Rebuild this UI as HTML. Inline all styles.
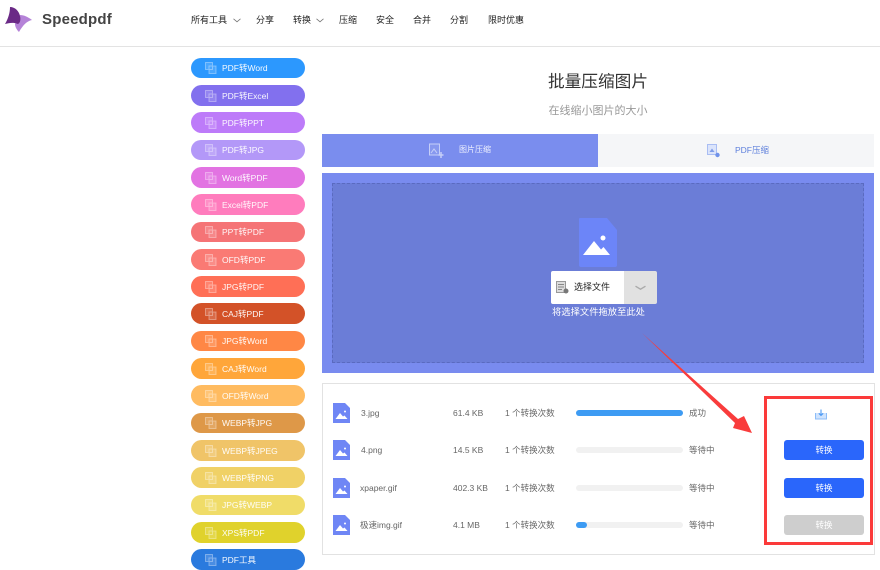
<!DOCTYPE html>
<html lang="zh">
<head>
<meta charset="utf-8">
<title>批量压缩图片</title>
<style>
html,body{margin:0;padding:0;background:#fff}
body{width:880px;height:558px;overflow:hidden;position:relative;font-family:"Liberation Sans","Noto Sans CJK SC",sans-serif}
.a{position:absolute;white-space:nowrap}
.nav{position:absolute;top:14px;font-size:9px;line-height:12px;color:#222;white-space:nowrap}
.b{position:absolute;left:191px;width:114px;border-radius:11px;color:#fff;font-size:8.5px}
.b span{position:absolute;left:31px;top:50%;margin-top:-6px;line-height:12px;white-space:nowrap;opacity:.95}
.b svg{position:absolute;left:14px;top:50%;margin-top:-6px}
.t{position:absolute;font-size:8.5px;line-height:12px;color:#666;white-space:nowrap}
.track{position:absolute;left:576px;width:107px;height:6px;border-radius:3px;background:#f1f1f1}
.fill{position:absolute;left:0;top:0;height:6px;border-radius:3px;background:#3d9bf3}
.btn{position:absolute;left:784px;width:80px;height:20px;border-radius:3px;background:#2a66fb;color:#fff;font-size:8.5px;line-height:20px;text-align:center}
</style>
</head>
<body>
<svg class="a" style="left:0;top:0" width="40" height="40" viewBox="0 0 40 40">
<path d="M20 15 C24 15 28 17 32 20 C27 21 23 25 19 32 C17 30 15 27 15 24 Z" fill="#b583d8"/>
<path d="M10 7 C15 7 19 11 20 16 C21 20 20 23 18 24 C13 22 9 23 5 24 C8 19 10 13 10 7 Z" fill="#6a2a86"/>
</svg>
<div class="a" style="left:42px;top:10px;font-size:15px;line-height:19px;font-weight:bold;color:#444;letter-spacing:.2px">Speedpdf</div>
<div class="nav" style="left:191px">所有工具</div>
<svg class="a" style="left:233px;top:18px" width="8" height="5"><path d="M.5.8l3.500 3L7.500.8" fill="none" stroke="#777" stroke-width=".8"/></svg>
<div class="nav" style="left:256px">分享</div>
<div class="nav" style="left:293px">转换</div>
<svg class="a" style="left:316px;top:18px" width="8" height="5"><path d="M.5.8l3.500 3L7.500.8" fill="none" stroke="#777" stroke-width=".8"/></svg>
<div class="nav" style="left:339px">压缩</div>
<div class="nav" style="left:376px">安全</div>
<div class="nav" style="left:413px">合并</div>
<div class="nav" style="left:450px">分割</div>
<div class="nav" style="left:488px">限时优惠</div>
<div class="a" style="left:0;top:46px;width:880px;height:1px;background:#e3e3e3"></div>

<div class="b" style="top:58px;height:20px;background:#2c98fe"><svg width="12" height="12"><path d="M.5.500h7v7h-7zM4 4h7v7.500h-7z" fill="#fff" fill-opacity=".15" stroke="#fff" stroke-opacity=".35"/></svg><span>PDF转Word</span></div>
<div class="b" style="top:85px;height:21px;background:#8270ee"><svg width="12" height="12"><path d="M.5.500h7v7h-7zM4 4h7v7.500h-7z" fill="#fff" fill-opacity=".15" stroke="#fff" stroke-opacity=".35"/></svg><span>PDF转Excel</span></div>
<div class="b" style="top:112px;height:21px;background:#bd7bf9"><svg width="12" height="12"><path d="M.5.500h7v7h-7zM4 4h7v7.500h-7z" fill="#fff" fill-opacity=".15" stroke="#fff" stroke-opacity=".35"/></svg><span>PDF转PPT</span></div>
<div class="b" style="top:140px;height:20px;background:#b398f8"><svg width="12" height="12"><path d="M.5.500h7v7h-7zM4 4h7v7.500h-7z" fill="#fff" fill-opacity=".15" stroke="#fff" stroke-opacity=".35"/></svg><span>PDF转JPG</span></div>
<div class="b" style="top:167px;height:21px;background:#e273e2"><svg width="12" height="12"><path d="M.5.500h7v7h-7zM4 4h7v7.500h-7z" fill="#fff" fill-opacity=".15" stroke="#fff" stroke-opacity=".35"/></svg><span>Word转PDF</span></div>
<div class="b" style="top:194px;height:21px;background:#ff7cbd"><svg width="12" height="12"><path d="M.5.500h7v7h-7zM4 4h7v7.500h-7z" fill="#fff" fill-opacity=".15" stroke="#fff" stroke-opacity=".35"/></svg><span>Excel转PDF</span></div>
<div class="b" style="top:222px;height:20px;background:#f57476"><svg width="12" height="12"><path d="M.5.500h7v7h-7zM4 4h7v7.500h-7z" fill="#fff" fill-opacity=".15" stroke="#fff" stroke-opacity=".35"/></svg><span>PPT转PDF</span></div>
<div class="b" style="top:249px;height:21px;background:#fa7a74"><svg width="12" height="12"><path d="M.5.500h7v7h-7zM4 4h7v7.500h-7z" fill="#fff" fill-opacity=".15" stroke="#fff" stroke-opacity=".35"/></svg><span>OFD转PDF</span></div>
<div class="b" style="top:276px;height:21px;background:#ff6f56"><svg width="12" height="12"><path d="M.5.500h7v7h-7zM4 4h7v7.500h-7z" fill="#fff" fill-opacity=".15" stroke="#fff" stroke-opacity=".35"/></svg><span>JPG转PDF</span></div>
<div class="b" style="top:303px;height:21px;background:#d35228"><svg width="12" height="12"><path d="M.5.500h7v7h-7zM4 4h7v7.500h-7z" fill="#fff" fill-opacity=".15" stroke="#fff" stroke-opacity=".35"/></svg><span>CAJ转PDF</span></div>
<div class="b" style="top:331px;height:20px;background:#ff8745"><svg width="12" height="12"><path d="M.5.500h7v7h-7zM4 4h7v7.500h-7z" fill="#fff" fill-opacity=".15" stroke="#fff" stroke-opacity=".35"/></svg><span>JPG转Word</span></div>
<div class="b" style="top:358px;height:21px;background:#ffa63a"><svg width="12" height="12"><path d="M.5.500h7v7h-7zM4 4h7v7.500h-7z" fill="#fff" fill-opacity=".15" stroke="#fff" stroke-opacity=".35"/></svg><span>CAJ转Word</span></div>
<div class="b" style="top:385px;height:21px;background:#ffbb60"><svg width="12" height="12"><path d="M.5.500h7v7h-7zM4 4h7v7.500h-7z" fill="#fff" fill-opacity=".15" stroke="#fff" stroke-opacity=".35"/></svg><span>OFD转Word</span></div>
<div class="b" style="top:413px;height:20px;background:#de9848"><svg width="12" height="12"><path d="M.5.500h7v7h-7zM4 4h7v7.500h-7z" fill="#fff" fill-opacity=".15" stroke="#fff" stroke-opacity=".35"/></svg><span>WEBP转JPG</span></div>
<div class="b" style="top:440px;height:21px;background:#f0c468"><svg width="12" height="12"><path d="M.5.500h7v7h-7zM4 4h7v7.500h-7z" fill="#fff" fill-opacity=".15" stroke="#fff" stroke-opacity=".35"/></svg><span>WEBP转JPEG</span></div>
<div class="b" style="top:467px;height:21px;background:#f0d166"><svg width="12" height="12"><path d="M.5.500h7v7h-7zM4 4h7v7.500h-7z" fill="#fff" fill-opacity=".15" stroke="#fff" stroke-opacity=".35"/></svg><span>WEBP转PNG</span></div>
<div class="b" style="top:495px;height:20px;background:#f0dc68"><svg width="12" height="12"><path d="M.5.500h7v7h-7zM4 4h7v7.500h-7z" fill="#fff" fill-opacity=".15" stroke="#fff" stroke-opacity=".35"/></svg><span>JPG转WEBP</span></div>
<div class="b" style="top:522px;height:21px;background:#e0d22c"><svg width="12" height="12"><path d="M.5.500h7v7h-7zM4 4h7v7.500h-7z" fill="#fff" fill-opacity=".15" stroke="#fff" stroke-opacity=".35"/></svg><span>XPS转PDF</span></div>
<div class="b" style="top:549px;height:21px;background:#2a7ade"><svg width="12" height="12"><path d="M.5.500h7v7h-7zM4 4h7v7.500h-7z" fill="#fff" fill-opacity=".15" stroke="#fff" stroke-opacity=".35"/></svg><span>PDF工具</span></div>

<div class="a" style="left:322px;width:552px;top:71px;text-align:center;font-size:16.700px;line-height:21px;color:#333">批量压缩图片</div>
<div class="a" style="left:322px;width:552px;top:104px;text-align:center;font-size:11px;line-height:15px;color:#999">在线缩小图片的大小</div>

<div class="a" style="left:322px;top:134px;width:276px;height:33px;background:#7a8dee"></div>
<div class="a" style="left:598px;top:134px;width:276px;height:33px;background:#f5f6f8"></div>
<svg class="a" style="left:428px;top:143px" width="16" height="15"><path d="M1.500 1h10v11h-10z" fill="#fff" fill-opacity=".1" stroke="#c6cff8"/><path d="M3 10l3-4 3 4" fill="none" stroke="#c6cff8"/><path d="M13 9v6M10.500 12h5" stroke="#c6cff8" stroke-width="1.500"/></svg>
<div class="t" style="left:459px;top:144px;color:#f0f2ff;font-size:8px">图片压缩</div>
<svg class="a" style="left:707px;top:144px" width="14" height="14"><path d="M.5.500h9v10h-9z" fill="#dbe4fb" stroke="#a9bdf3"/><path d="M2.500 8l2.500-3.500L7.500 8z" fill="#7f9de9"/><circle cx="10.500" cy="11" r="2.200" fill="#6f92ea"/></svg>
<div class="t" style="left:735px;top:144px;color:#5f80dc;font-size:8.500px">PDF压缩</div>

<div class="a" style="left:322px;top:173px;width:552px;height:200px;background:#798bef"></div>
<div class="a" style="left:332px;top:183px;width:532px;height:180px;box-sizing:border-box;background:#6b7dd7;border:1px dashed #5a6ac0"></div>
<svg class="a" style="left:579px;top:218px" width="38" height="49" viewBox="0 0 38 49">
<path d="M1 0H28L38 12V47a2 2 0 0 1-2 2H2a2 2 0 0 1-2-2V1a1 1 0 0 1 1-1Z" fill="#6c85f8"/>
<circle cx="24" cy="20" r="2.500" fill="#fff"/>
<path d="M4 37 L15 23 L22 31.500 L24.500 29 L31 37Z" fill="#fff"/>
</svg>
<div class="a" style="left:551px;top:271px;width:73px;height:33px;background:#fff;border-radius:2px 0 0 2px"></div>
<div class="a" style="left:624px;top:271px;width:33px;height:33px;background:#e1e1e1;border-radius:0 2px 2px 0"></div>
<svg class="a" style="left:556px;top:281px" width="13" height="13"><rect x=".5" y=".5" width="9" height="11" fill="#ddd" stroke="#999"/><path d="M2 3.500h6M2 6h6M2 8.500h4" stroke="#888"/><circle cx="10" cy="10" r="2.500" fill="#777"/></svg>
<div class="t" style="left:574px;top:281px;color:#222;font-size:9px">选择文件</div>
<svg class="a" style="left:635px;top:285px" width="11" height="6"><path d="M.5 1.200l5 3 5-3" fill="none" stroke="#aaa" stroke-width="1.400"/></svg>
<div class="t" style="left:552px;top:306px;color:#fff;font-size:9.300px">将选择文件拖放至此处</div>

<div class="a" style="left:322px;top:383px;width:553px;height:172px;box-sizing:border-box;border:1px solid #e2e2e2"></div>

<svg class="a" style="left:333px;top:403px" width="17" height="20" viewBox="0 0 17 20"><path d="M0 0H12L17 5V20H0Z" fill="#6f86f5"/><circle cx="12" cy="8.500" r="1" fill="#fff"/><path d="M2.500 16L7 10L10 13.500L11.500 12.500L14.500 16Z" fill="#fff"/></svg>
<svg class="a" style="left:333px;top:440px" width="17" height="20" viewBox="0 0 17 20"><path d="M0 0H12L17 5V20H0Z" fill="#6f86f5"/><circle cx="12" cy="8.500" r="1" fill="#fff"/><path d="M2.500 16L7 10L10 13.500L11.500 12.500L14.500 16Z" fill="#fff"/></svg>
<svg class="a" style="left:333px;top:478px" width="17" height="20" viewBox="0 0 17 20"><path d="M0 0H12L17 5V20H0Z" fill="#6f86f5"/><circle cx="12" cy="8.500" r="1" fill="#fff"/><path d="M2.500 16L7 10L10 13.500L11.500 12.500L14.500 16Z" fill="#fff"/></svg>
<svg class="a" style="left:333px;top:515px" width="17" height="20" viewBox="0 0 17 20"><path d="M0 0H12L17 5V20H0Z" fill="#6f86f5"/><circle cx="12" cy="8.500" r="1" fill="#fff"/><path d="M2.500 16L7 10L10 13.500L11.500 12.500L14.500 16Z" fill="#fff"/></svg>

<div class="t" style="left:361px;top:407px">3.jpg</div>
<div class="t" style="left:361px;top:444px">4.png</div>
<div class="t" style="left:360px;top:482px">xpaper.gif</div>
<div class="t" style="left:360px;top:519px">极速img.gif</div>
<div class="t" style="left:453px;top:407px">61.4 KB</div>
<div class="t" style="left:453px;top:444px">14.5 KB</div>
<div class="t" style="left:453px;top:482px">402.3 KB</div>
<div class="t" style="left:453px;top:519px">4.1 MB</div>
<div class="t" style="left:505px;top:407px">1 个转换次数</div>
<div class="t" style="left:505px;top:444px">1 个转换次数</div>
<div class="t" style="left:505px;top:482px">1 个转换次数</div>
<div class="t" style="left:505px;top:519px">1 个转换次数</div>

<div class="track" style="top:410px"><div class="fill" style="width:107px"></div></div>
<div class="track" style="top:447px"></div>
<div class="track" style="top:485px"></div>
<div class="track" style="top:522px"><div class="fill" style="width:11px"></div></div>

<div class="t" style="left:689px;top:407px">成功</div>
<div class="t" style="left:689px;top:444px">等待中</div>
<div class="t" style="left:689px;top:482px">等待中</div>
<div class="t" style="left:689px;top:519px">等待中</div>

<svg class="a" style="left:815px;top:409px" width="12" height="11"><path d="M.5 4v6h11V4" fill="#cfe3fd" stroke="#8dbdf8"/><path d="M6 .5v5.500M3.800 4.300L6 6.500l2.200-2.200" fill="none" stroke="#4f9bf4" stroke-width="1.100"/></svg>
<div class="btn" style="top:440px">转换</div>
<div class="btn" style="top:478px">转换</div>
<div class="btn" style="top:515px;background:#cecece">转换</div>

<div class="a" style="left:764px;top:396px;width:109px;height:149px;box-sizing:border-box;border:3px solid #fb3a3a"></div>
<svg class="a" style="left:0;top:0;pointer-events:none" width="880" height="558" viewBox="0 0 880 558">
<path d="M642 333 L738 419 L744 416 L752 433 L733 428 L735 423 Z" fill="#f93c3c"/>
</svg>
</body>
</html>
